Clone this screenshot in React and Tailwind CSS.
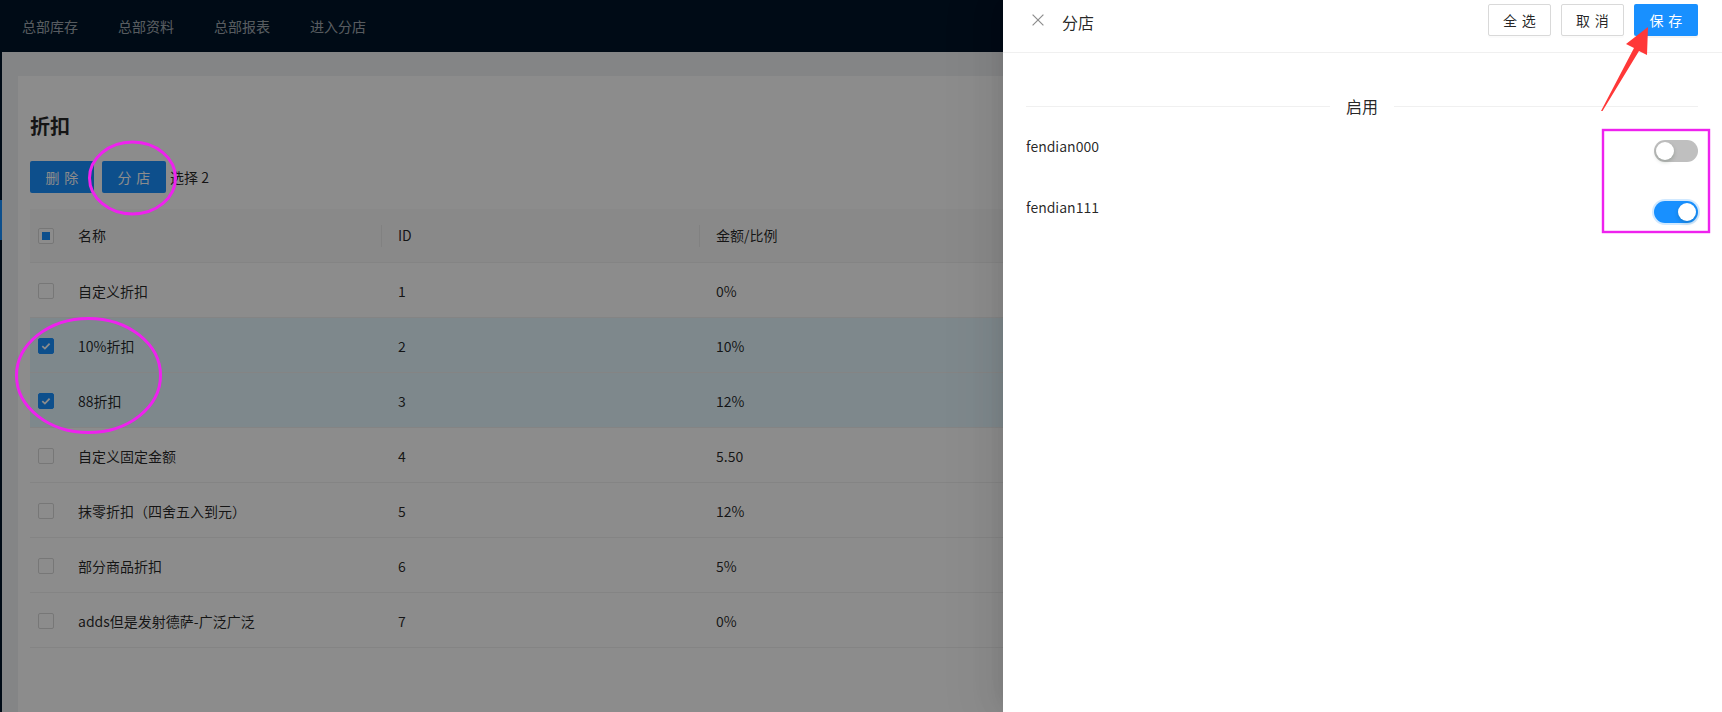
import React from "react";

const rows = [
  { name: "自定义折扣", id: "1", amt: "0%", sel: false },
  { name: "10%折扣", id: "2", amt: "10%", sel: true },
  { name: "88折扣", id: "3", amt: "12%", sel: true },
  { name: "自定义固定金额", id: "4", amt: "5.50", sel: false },
  { name: "抹零折扣（四舍五入到元）", id: "5", amt: "12%", sel: false },
  { name: "部分商品折扣", id: "6", amt: "5%", sel: false },
  { name: "adds但是发射德萨-广泛广泛", id: "7", amt: "0%", sel: false },
];

function Checkbox({ checked }) {
  if (checked) {
    return (
      <span className="w-4 h-4 rounded-[2px] bg-[#1890ff] border border-[#1890ff] flex items-center justify-center">
        <svg width="12" height="12" viewBox="0 0 12 12">
          <path d="M2.3 6.2 L4.9 8.6 L9.6 3.6" fill="none" stroke="white" strokeWidth="1.8" />
        </svg>
      </span>
    );
  }
  return <span className="w-4 h-4 rounded-[2px] bg-white border border-[#d9d9d9] block" />;
}

function Switch({ on }) {
  return (
    <span
      className={
        on
          ? "relative block w-[44px] h-[22px] rounded-full bg-[#1890ff] shadow-[0_0_0_2px_rgba(24,144,255,0.2)]"
          : "relative block w-[44px] h-[22px] rounded-full bg-[#bfbfbf]"
      }
    >
      <span
        className={
          on
            ? "absolute top-[2px] right-[2px] w-[18px] h-[18px] rounded-full bg-white shadow-[0_2px_4px_rgba(0,35,11,0.2)]"
            : "absolute top-[2px] left-[2px] w-[18px] h-[18px] rounded-full bg-white shadow-[0_2px_4px_rgba(0,35,11,0.2)]"
        }
      />
    </span>
  );
}

function BtnText({ children }) {
  return <span className="tracking-[0.34em] mr-[-0.34em]">{children}</span>;
}

export default function App() {
  return (
    <div className="relative w-[1722px] h-[712px] overflow-hidden font-['Noto_Sans_CJK_SC',sans-serif] text-[14px] text-[rgba(0,0,0,0.85)]">
      {/* top nav */}
      <div className="h-[52px] bg-[#001529] flex items-center pl-[2px]">
        {["总部库存", "总部资料", "总部报表", "进入分店"].map((t) => (
          <div key={t} className="px-5 text-[rgba(255,255,255,0.65)] text-[14px]">
            {t}
          </div>
        ))}
      </div>

      <div className="flex h-[660px]">
        {/* collapsed sider edge */}
        <div className="w-[2px] bg-[#001529] flex flex-col">
          <div className="h-[148px]" />
          <div className="h-[40px] bg-[#1890ff]" />
        </div>

        {/* content */}
        <div className="flex-1 bg-[#f0f2f5] pl-4 pr-4 pt-6">
          <div className="bg-white h-[700px] px-3 pt-[36px]">
            <div className="text-[20px] leading-[28px] font-bold text-[rgba(0,0,0,0.85)]">折扣</div>
            <div className="mt-[21px] flex items-center">
              <button className="w-[64px] h-[32px] bg-[#1890ff] text-white text-[14px] rounded-[2px]"><BtnText>删除</BtnText></button>
              <button className="ml-2 w-[64px] h-[32px] bg-[#1890ff] text-white text-[14px] rounded-[2px]"><BtnText>分店</BtnText></button>
              <span className="ml-1">选择 2</span>
            </div>

            <div className="mt-4">
              {/* header */}
              <div className="h-[54px] bg-[#fafafa] border-b border-[#f0f0f0] flex items-center">
                <div className="w-[32px] pl-2 flex items-center">
                  <span className="w-4 h-4 rounded-[2px] bg-white border border-[#d9d9d9] flex items-center justify-center">
                    <span className="w-2 h-2 bg-[#1890ff]" />
                  </span>
                </div>
                <div className="w-[320px] pl-4 relative h-full flex items-center">
                  名称
                  <span className="absolute right-0 top-1/2 -translate-y-1/2 w-px h-[22px] bg-[rgba(0,0,0,0.06)]" />
                </div>
                <div className="w-[318px] pl-4 relative h-full flex items-center">
                  ID
                  <span className="absolute right-0 top-1/2 -translate-y-1/2 w-px h-[22px] bg-[rgba(0,0,0,0.06)]" />
                </div>
                <div className="flex-1 pl-4">金额/比例</div>
              </div>
              {rows.map((r) => (
                <div
                  key={r.id}
                  className={
                    r.sel
                      ? "h-[55px] pt-[2px] bg-[#e6f7ff] border-b border-[#f0f0f0] flex items-center"
                      : "h-[55px] pt-[2px] bg-white border-b border-[#f0f0f0] flex items-center"
                  }
                >
                  <div className="w-[32px] pl-2 flex items-center">
                    <Checkbox checked={r.sel} />
                  </div>
                  <div className="w-[320px] pl-4">{r.name}</div>
                  <div className="w-[318px] pl-4">{r.id}</div>
                  <div className="flex-1 pl-4">{r.amt}</div>
                </div>
              ))}
            </div>
          </div>
        </div>
      </div>

      {/* mask */}
      <div className="absolute inset-0 bg-black/45" />

      {/* drawer */}
      <div className="absolute right-0 top-0 h-full w-[719px] bg-white shadow-[-6px_0_16px_-8px_rgba(0,0,0,0.08),-9px_0_28px_0_rgba(0,0,0,0.05),-12px_0_48px_16px_rgba(0,0,0,0.03)]">
        <div className="h-[53px] border-b border-[#f0f0f0] flex items-start pt-[4px] pl-[29px] pr-6">
          <div className="h-[32px] flex items-center">
            <svg width="12" height="12" viewBox="0 0 12 12">
              <path d="M0.6 0.6 L11.4 11.4 M11.4 0.6 L0.6 11.4" stroke="rgba(0,0,0,0.45)" strokeWidth="1.2" fill="none" />
            </svg>
          </div>
          <div className="ml-[18px] h-[32px] flex items-center pt-1 text-[16px] text-[rgba(0,0,0,0.85)]">分店</div>
          <div className="ml-auto flex gap-[10px]">
            <button className="w-[63px] h-[32px] border border-[#d9d9d9] bg-white rounded-[2px] text-[14px] text-[rgba(0,0,0,0.85)] shadow-[0_2px_0_rgba(0,0,0,0.015)]"><BtnText>全选</BtnText></button>
            <button className="w-[63px] h-[32px] border border-[#d9d9d9] bg-white rounded-[2px] text-[14px] text-[rgba(0,0,0,0.85)] shadow-[0_2px_0_rgba(0,0,0,0.015)]"><BtnText>取消</BtnText></button>
            <button className="w-[64px] h-[32px] bg-[#1890ff] rounded-[2px] text-[14px] text-white shadow-[0_2px_0_rgba(0,0,0,0.045)]"><BtnText>保存</BtnText></button>
          </div>
        </div>
        <div className="pl-[23px] pr-6">
          <div className="mt-[41px] flex items-center h-[24px]">
            <div className="flex-1 h-px bg-[#f0f0f0]" />
            <div className="px-4 text-[16px] font-normal text-[rgba(0,0,0,0.85)]">启用</div>
            <div className="flex-1 h-px bg-[#f0f0f0]" />
          </div>
          <div className="mt-[17px] flex justify-between items-start">
            <span className="leading-[22px]">fendian000</span>
            <span className="mt-[5px]"><Switch on={false} /></span>
          </div>
          <div className="mt-[34px] flex justify-between items-start">
            <span className="leading-[22px]">fendian111</span>
            <span className="mt-[5px]"><Switch on={true} /></span>
          </div>
        </div>
      </div>

      {/* annotations */}
      <svg className="absolute inset-0 pointer-events-none" width="1722" height="712" viewBox="0 0 1722 712">
        <ellipse cx="132.5" cy="178" rx="43" ry="36" fill="none" stroke="#ee22ee" strokeWidth="3" />
        <ellipse cx="88.5" cy="375.5" rx="72" ry="57" fill="none" stroke="#ee22ee" strokeWidth="3" />
        <rect x="1603" y="130" width="106" height="102" fill="none" stroke="#ee22ee" strokeWidth="2.4" />
        <polygon points="1601,111 1634,48 1626,44 1648,27 1647,55 1639,51 1602.5,111" fill="#ff3838" />
      </svg>
    </div>
  );
}
